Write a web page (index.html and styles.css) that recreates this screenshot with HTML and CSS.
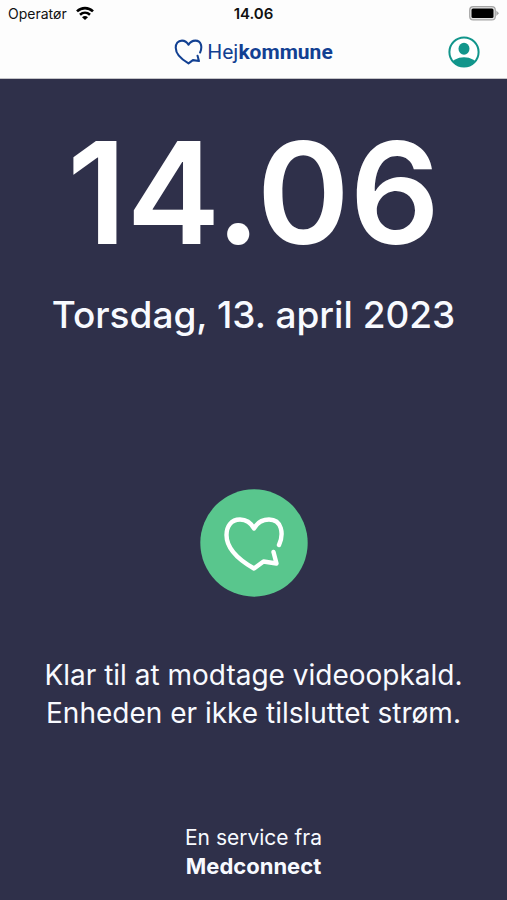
FILE: index.html
```html
<!DOCTYPE html>
<html lang="da">
<head>
<meta charset="utf-8">
<meta name="viewport" content="width=device-width, initial-scale=1">
<title>Hejkommune</title>
<link rel="stylesheet" href="styles.css">
</head>
<body>
<header class="top">
  <div class="status">
    <div class="carrier">
      <span>Operatør</span>
      <svg class="wifi" viewBox="0 0 20 15" aria-hidden="true">
        <path d="M2 5.4C6.600 1 13.400 1 18 5.400M5 8.700c3-2.700 7-2.700 10 0" fill="none" stroke="currentColor" stroke-width="2.600"/>
        <path d="M10 14 7 11.200q3-2.200 6 0z" fill="currentColor"/>
      </svg>
    </div>
    <time class="clock-small">14.06</time>
    <svg class="battery" viewBox="0 0 30 15" aria-hidden="true">
      <rect x="0.700" y="0.700" width="25.600" height="13.200" rx="3.500" fill="#e4e4e4" stroke="#a5a5a5" stroke-width="1.200"/>
      <rect x="2.500" y="2.500" width="22" height="9.600" rx="1.500" fill="#000"/>
      <path d="M27.300 4.500 30 7.300 27.300 10z" fill="#a5a5a5"/>
    </svg>
  </div>
  <div class="bar">
    <div class="brand">
      <svg class="brand-icon" viewBox="33 36 62 56" aria-hidden="true">
        <use href="#heart"/>
      </svg>
      <span>Hej<b>kommune</b></span>
    </div>
    <button class="profile" aria-label="Profil">
      <svg viewBox="0 0 32 32" aria-hidden="true">
        <clipPath id="disc"><circle cx="16" cy="16" r="15"/></clipPath>
        <circle cx="16" cy="16" r="14.600" fill="#fff" stroke="currentColor" stroke-width="2"/>
        <ellipse cx="16" cy="12.800" rx="5.500" ry="6" fill="currentColor"/>
        <ellipse cx="16" cy="28.500" rx="12.500" ry="7.200" fill="currentColor" clip-path="url(#disc)"/>
      </svg>
    </button>
  </div>
</header>
<main class="screen">
  <time class="clock">14.06</time>
  <p class="date">Torsdag, 13. april 2023</p>
  <svg class="badge" viewBox="10 9 108 108" aria-hidden="true">
    <circle cx="64" cy="63" r="53.700" fill="#59c68d"/>
    <path id="heart" d="M89 65C94 54 92 39.500 79 39.500C72 39.500 67 43 64 48.500C61 43 56 39.500 50 39.500C41 39.500 36.500 46.500 36.500 55C36.500 69 49 80 64 88.500L73.500 81.500L86.500 83.500L83.500 72" fill="none" stroke="currentColor" stroke-width="4.400" stroke-linecap="round" stroke-linejoin="round"/>
  </svg>
  <p class="message">Klar til at modtage videoopkald.<br>Enheden er ikke tilsluttet strøm.</p>
  <footer class="service">En service fra<br><b>Medconnect</b></footer>
</main>
</body>
</html>
```
FILE: styles.css
```css
* { box-sizing: border-box; }
body {
  margin: 0;
  min-height: 100vh;
  display: flex;
  flex-direction: column;
  background: #2f304a;
  font-family: Inter, sans-serif;
}
p { margin: 0; }
.top {
  background: #fdfdfd;
  color: #111;
  border-bottom: 1px solid #c4c4c8;
}
.status {
  display: grid;
  grid-template-columns: 1fr auto 1fr;
  align-items: center;
  height: 27px;
  padding: 0 8px;
  font-size: 14px;
}
.carrier { display: flex; align-items: center; gap: 8px; }
.wifi { width: 20px; height: 15px; color: #000; }
.clock-small { font-size: 15px; font-weight: 600; }
.battery { width: 30px; height: 15px; justify-self: end; }
.bar {
  display: grid;
  grid-template-columns: 1fr auto 1fr;
  align-items: center;
  height: 51px;
  padding: 0 27px 2px;
}
.brand {
  grid-column: 2;
  display: flex;
  align-items: center;
  gap: 4px;
  color: #124092;
  font-family: Roboto, sans-serif;
  font-size: 21px;
}
.brand-icon { width: 29px; height: 26px; }
.profile {
  justify-self: end;
  width: 32px;
  height: 32px;
  padding: 0;
  border: 0;
  background: none;
  color: #11958b;
}
.profile svg { display: block; }
.screen {
  flex: 1;
  display: flex;
  flex-direction: column;
  align-items: center;
  padding: 44px 16px 19px;
  color: #f8faff;
  text-align: center;
}
.clock { font-size: 141px; line-height: 140px; font-weight: 600; color: #fff; }
.date { margin-top: 28px; font-size: 37px; line-height: 48px; font-weight: 500; }
.badge { width: 108px; height: 108px; margin-top: 150px; color: #fff; }
.message { margin-top: 59px; font-size: 28px; line-height: 38px; }
.service { margin-top: auto; font-size: 21px; line-height: 29px; }
.service b { font-size: 22px; }
```
